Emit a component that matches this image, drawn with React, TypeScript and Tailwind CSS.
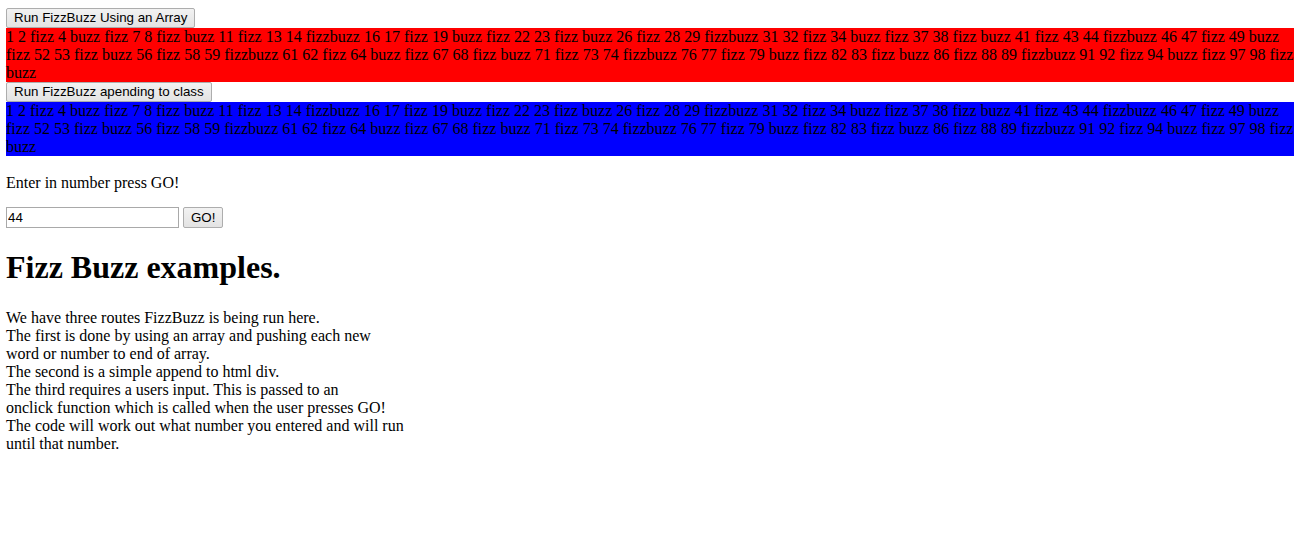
const fizzBuzz = () => {
  const out: string[] = []
  for (let i = 1; i <= 100; i++) {
    if (i % 15 === 0) out.push("fizzbuzz")
    else if (i % 3 === 0) out.push("fizz")
    else if (i % 5 === 0) out.push("buzz")
    else out.push(String(i))
  }
  return out.join(" ")
}

const btn =
  "h-[20px] px-[7px] border border-[#adadad] rounded-[2px] bg-gradient-to-b from-[#f2f2f2] to-[#e3e3e3] font-['Liberation_Sans',Arial,sans-serif] text-[13.33px] leading-[16px] text-black"

const notes = [
  "We have three routes FizzBuzz is being run here.",
  "The first is done by using an array and pushing each new",
  "word or number to end of array.",
  "The second is a simple append to html div.",
  "The third requires a users input. This is passed to an",
  "onclick function which is called when the user presses GO!",
  "The code will work out what number you entered and will run",
  "until that number.",
]

export default function App() {
  const text = fizzBuzz()
  return (
    <div className="min-h-[554px] bg-white pl-[6px] pr-[4px] pt-[8px] font-['Liberation_Serif','Times_New_Roman',serif] text-[16px] leading-[18px] text-black">
      <button className={btn}>Run FizzBuzz Using an Array</button>
      <div className="bg-[#ff0000]">{text}</div>
      <button className={btn}>Run FizzBuzz apending to class</button>
      <div className="bg-[#0000ff]">{text}</div>

      <p className="mt-[18px]">Enter in number press GO!</p>

      <div className="mt-[15px] flex items-center gap-[4px]">
        <input
          defaultValue="44"
          className="h-[21px] w-[173px] border border-[#a9a9a9] px-[1px] font-['Liberation_Sans',Arial,sans-serif] text-[13.33px] text-black outline-none"
        />
        <button className={btn + " h-[21px] w-[40px]"}>GO!</button>
      </div>

      <h1 className="mt-[21px] text-[32px] font-bold leading-[37px]">Fizz Buzz examples.</h1>

      <div className="mt-[23px]">
        {notes.map((n) => (
          <div key={n}>{n}</div>
        ))}
      </div>
    </div>
  )
}
